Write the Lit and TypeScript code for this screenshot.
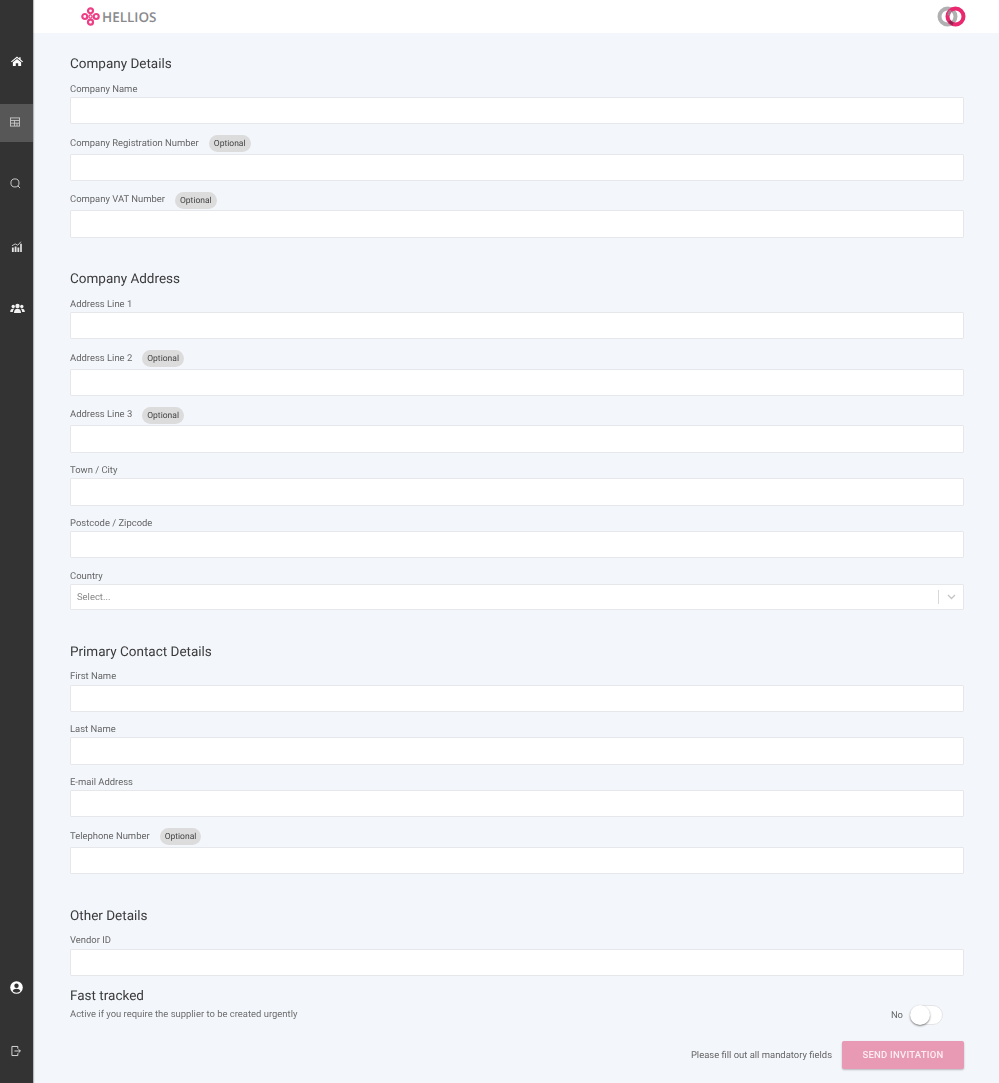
import { LitElement, html, css, svg } from "lit";
import { customElement } from "lit/decorators.js";

type F = { label: string; optional?: boolean; select?: boolean };

const sections: { title: string; fields: F[] }[] = [
  { title: "Company Details", fields: [
    { label: "Company Name" },
    { label: "Company Registration Number", optional: true },
    { label: "Company VAT Number", optional: true },
  ]},
  { title: "Company Address", fields: [
    { label: "Address Line 1" },
    { label: "Address Line 2", optional: true },
    { label: "Address Line 3", optional: true },
    { label: "Town / City" },
    { label: "Postcode / Zipcode" },
    { label: "Country", select: true },
  ]},
  { title: "Primary Contact Details", fields: [
    { label: "First Name" },
    { label: "Last Name" },
    { label: "E-mail Address" },
    { label: "Telephone Number", optional: true },
  ]},
  { title: "Other Details", fields: [{ label: "Vendor ID" }]},
];

const icons = {
  home: svg`<svg width="12" height="10.500" viewBox="0 0 14 12"><path fill="#fff" d="M7 0.6 L9.6 2.8 V1.2 H11.2 V4.1 L14 6.4 L13.2 7.3 L7 2.2 L0.8 7.3 L0 6.4 Z M2.2 7.2 L7 3.3 L11.8 7.2 V11.6 H8.4 V8.2 H5.6 V11.600 H2.2 Z"/></svg>`,
  table: svg`<svg width="10" height="10" viewBox="0 0 11 10" fill="none" stroke="#c9c9c9" stroke-width="1"><rect x="0.5" y="0.5" width="10" height="9"/><path d="M.5 3.300H10.500M5 3.300V9.500M.5 6.300H10.500M7.700 6.300V9.500"/></svg>`,
  search: svg`<svg width="11" height="11" viewBox="0 0 12 12" fill="none" stroke="#d6d6d6" stroke-width="1"><circle cx="5.4" cy="5.4" r="4.4"/><path d="M8.600 8.600L11 11"/></svg>`,
  chart: svg`<svg width="11" height="11" viewBox="0 0 12 12"><path fill="#e4e4e4" d="M1 7h2v5H1zM4 6h2v6H4zM7 7h2v5H7zM10 3h1.8v9H10z"/><path fill="none" stroke="#e4e4e4" stroke-width="0.9" d="M1 5.2L4.6 3.2L7.4 4.6L10.8 0.8"/></svg>`,
  users: svg`<svg width="15" height="11" viewBox="0 0 16 12" fill="#f2f2f2"><circle cx="8" cy="3.2" r="2.4"/><circle cx="3.3" cy="3.8" r="1.8"/><circle cx="12.7" cy="3.8" r="1.8"/><path d="M4.2 11c0-3 1.4-4.6 3.8-4.6S11.800 8 11.800 11z"/><path d="M0 9.800c0-2.300 1.100-3.600 3.200-3.600 .5 0 .9.100 1.200.2-1 .9-1.400 2-1.500 3.400zM16 9.800c0-2.300-1.100-3.600-3.200-3.600-.5 0-.9.100-1.200.2 1 .9 1.400 2 1.500 3.400z"/></svg>`,
  account: svg`<svg width="13" height="13" viewBox="0 0 13 13"><circle cx="6.5" cy="6.500" r="6.300" fill="#fff"/><circle cx="6.500" cy="4.800" r="2.200" fill="#333"/><path fill="#333" d="M2.600 10c.6-1.600 2.200-2.300 3.900-2.300s3.300.7 3.900 2.300c-1 1.100-2.400 1.700-3.900 1.700S3.600 11.100 2.600 10z"/></svg>`,
  logout: svg`<svg width="10" height="12" viewBox="0 0 11 12" fill="none" stroke="#e6e6e6" stroke-width="1"><path d="M7.500 3.500V1H1v10h6.500V8.500"/><path d="M3.800 6H10.300M8.300 4L10.300 6L8.300 8"/></svg>`,
};

const logo = svg`<svg width="19" height="19" viewBox="0 0 19 19" fill="none" stroke="#ee3f86" stroke-width="2.200"><circle cx="9.500" cy="3.800" r="2.500"/><circle cx="9.500" cy="15.200" r="2.500"/><circle cx="3.800" cy="9.500" r="2.500"/><circle cx="15.200" cy="9.500" r="2.500"/><circle cx="9.500" cy="9.500" r="1.600" stroke-width="1.400"/></svg>`;

const avatar = svg`<svg width="29" height="21" viewBox="0 0 29 21" fill="none"><circle cx="10.500" cy="10.500" r="8" stroke="#b0b0b2" stroke-width="4"/><circle cx="18.500" cy="10.500" r="8" stroke="#e9286f" stroke-width="4"/><path d="M14 4.500a8 8 0 0 0-2.500 5" stroke="#a8788e" stroke-width="3"/><path d="M12.500 15a8 8 0 0 0 3.500 3" stroke="#8e2650" stroke-width="3"/></svg>`;

@customElement("app-root")
export class AppRoot extends LitElement {
  static styles = css`
    :host { display: block; height: 1083px; overflow: hidden; font-family: Roboto, "Liberation Sans", sans-serif; background: #f3f6fb; text-rendering: geometricPrecision; }
    .shell { display: flex; height: 1083px; filter: blur(.3px); }
    .side { width: 33px; flex: none; background: #333; box-shadow: 1px 0 1px rgba(0,0,0,.25); display: flex; flex-direction: column; padding-top: 42px; box-sizing: border-box; z-index: 2; }
    .nav { height: 38px; margin-bottom: 23.75px; display: flex; align-items: center; justify-content: center; box-sizing: border-box; }
    .nav.active { background: #575757; }
    .nav.table { padding: 0 3px 2px 0; }
    .nav.search { padding: 0 3px 3px 0; }
    .nav.chart { padding-right: 1px; }
    .nav.users { padding-left: 2px; }
    .spacer { flex: 1; }
    .nav.low { margin-bottom: 26px; }
    .nav.logout { margin-bottom: 13px; padding-right: 1px; }
    .main { flex: 1; min-width: 0; display: flex; flex-direction: column; }
    .top { height: 33px; flex: none; background: #fff; display: flex; align-items: center; justify-content: space-between; padding: 0 33px 0 48px; }
    .brand { display: flex; align-items: center; gap: 2px; color: #8a8a8c; font-family: "Open Sans", sans-serif; font-weight: 600; font-size: 13.5px; }
    .brand svg, .avatar svg { display: block; }
    .content { padding: 21px 35px 0 37px; }
    h2 { margin: 0 0 -1.5px; padding-top: 1px; font-weight: 400; font-size: 13.5px; line-height: 18px; color: #3a3a3a; }
    section { margin-bottom: 31.5px; }
    section.last { margin-bottom: 0; }
    .field { margin-top: 6.7px; }
    .lab { display: flex; align-items: center; gap: 10px; font-size: 9.45px; line-height: 14px; color: #666; margin-bottom: .3px; min-height: 14px; padding: 4.5px 0 0; }
    .lab.opt { min-height: 20px; padding: 2.7px 0 0; margin-bottom: 0; }
    .badge { background: #dcdcdc; border-radius: 10px; color: #444; font-size: 8.5px; line-height: 18px; height: 17px; padding: 0 5px; }
    .input { height: 27.3px; box-sizing: border-box; background: #fff; border: 1px solid #e6e7ea; border-radius: 1px; }
    .select { display: flex; align-items: center; height: 26.3px; padding: 1px 0 0 6px; color: #888; font-size: 9.45px; }
    .select .val { flex: 1; }
    .select .sep { width: 1px; height: 14px; background: #d8d8d8; }
    .select .chev { width: 24px; display: flex; justify-content: center; }
    .fast { display: flex; align-items: flex-end; justify-content: space-between; margin-top: 11.5px; }
    .fast h3 { margin: 0; font-weight: 400; font-size: 13.5px; line-height: 18px; color: #3a3a3a; }
    .fast p { margin: 3px 0 0; font-size: 9.45px; line-height: 14px; color: #6e6e6e; }
    .tog { display: flex; align-items: center; gap: 7px; font-size: 9.45px; color: #666; margin-right: 21px; margin-bottom: -3px; }
    .switch { position: relative; width: 33px; height: 20px; box-sizing: border-box; border: 1px solid #e4e4e6; border-radius: 10px; background: #fff; }
    .knob { position: absolute; left: -1px; top: -1px; width: 20px; height: 20px; border-radius: 50%; background: #fff; box-shadow: 0 1px 2px rgba(0,0,0,.5); }
    .foot { display: flex; align-items: center; justify-content: flex-end; gap: 10px; margin-top: 18.5px; font-size: 9.45px; color: #666; }
    .foot span { padding-top: 1px; }
    button { width: 122px; height: 28px; border: 0; border-radius: 2px; background: #e899b3; color: #fbeef3; font: 500 9.5px Roboto, sans-serif; letter-spacing: .25px; box-shadow: 0 1px 2px rgba(0,0,0,.25); padding: 0; }
  `;

  private field(f: F) {
    return html`<div class="field">
      <div class="lab ${f.optional ? "opt" : ""}">
        <span>${f.label}</span>${f.optional ? html`<span class="badge">Optional</span>` : ""}
      </div>
      ${f.select
        ? html`<div class="input select"><span class="val">Select...</span><span class="sep"></span>
            <span class="chev"><svg width="9" height="6" viewBox="0 0 9 6" fill="none" stroke="#c4c4c4" stroke-width="1.300"><path d="M1 1l3.500 3.500L8 1"/></svg></span></div>`
        : html`<div class="input"></div>`}
    </div>`;
  }

  render() {
    return html`<div class="shell">
      <aside class="side">
        <div class="nav home">${icons.home}</div>
        <div class="nav active table">${icons.table}</div>
        <div class="nav search">${icons.search}</div>
        <div class="nav chart">${icons.chart}</div>
        <div class="nav users">${icons.users}</div>
        <div class="spacer"></div>
        <div class="nav low">${icons.account}</div>
        <div class="nav low logout">${icons.logout}</div>
      </aside>
      <div class="main">
        <header class="top">
          <div class="brand">${logo}<span>HELLIOS</span></div>
          <div class="avatar">${avatar}</div>
        </header>
        <div class="content">
          ${sections.map((s, i) => html`<section class="${i === sections.length - 1 ? "last" : ""}">
            <h2>${s.title}</h2>${s.fields.map((f) => this.field(f))}
          </section>`)}
          <div class="fast">
            <div><h3>Fast tracked</h3><p>Active if you require the supplier to be created urgently</p></div>
            <div class="tog"><span>No</span><div class="switch"><div class="knob"></div></div></div>
          </div>
          <div class="foot"><span>Please fill out all mandatory fields</span><button>SEND INVITATION</button></div>
        </div>
      </div>
    </div>`;
  }
}
